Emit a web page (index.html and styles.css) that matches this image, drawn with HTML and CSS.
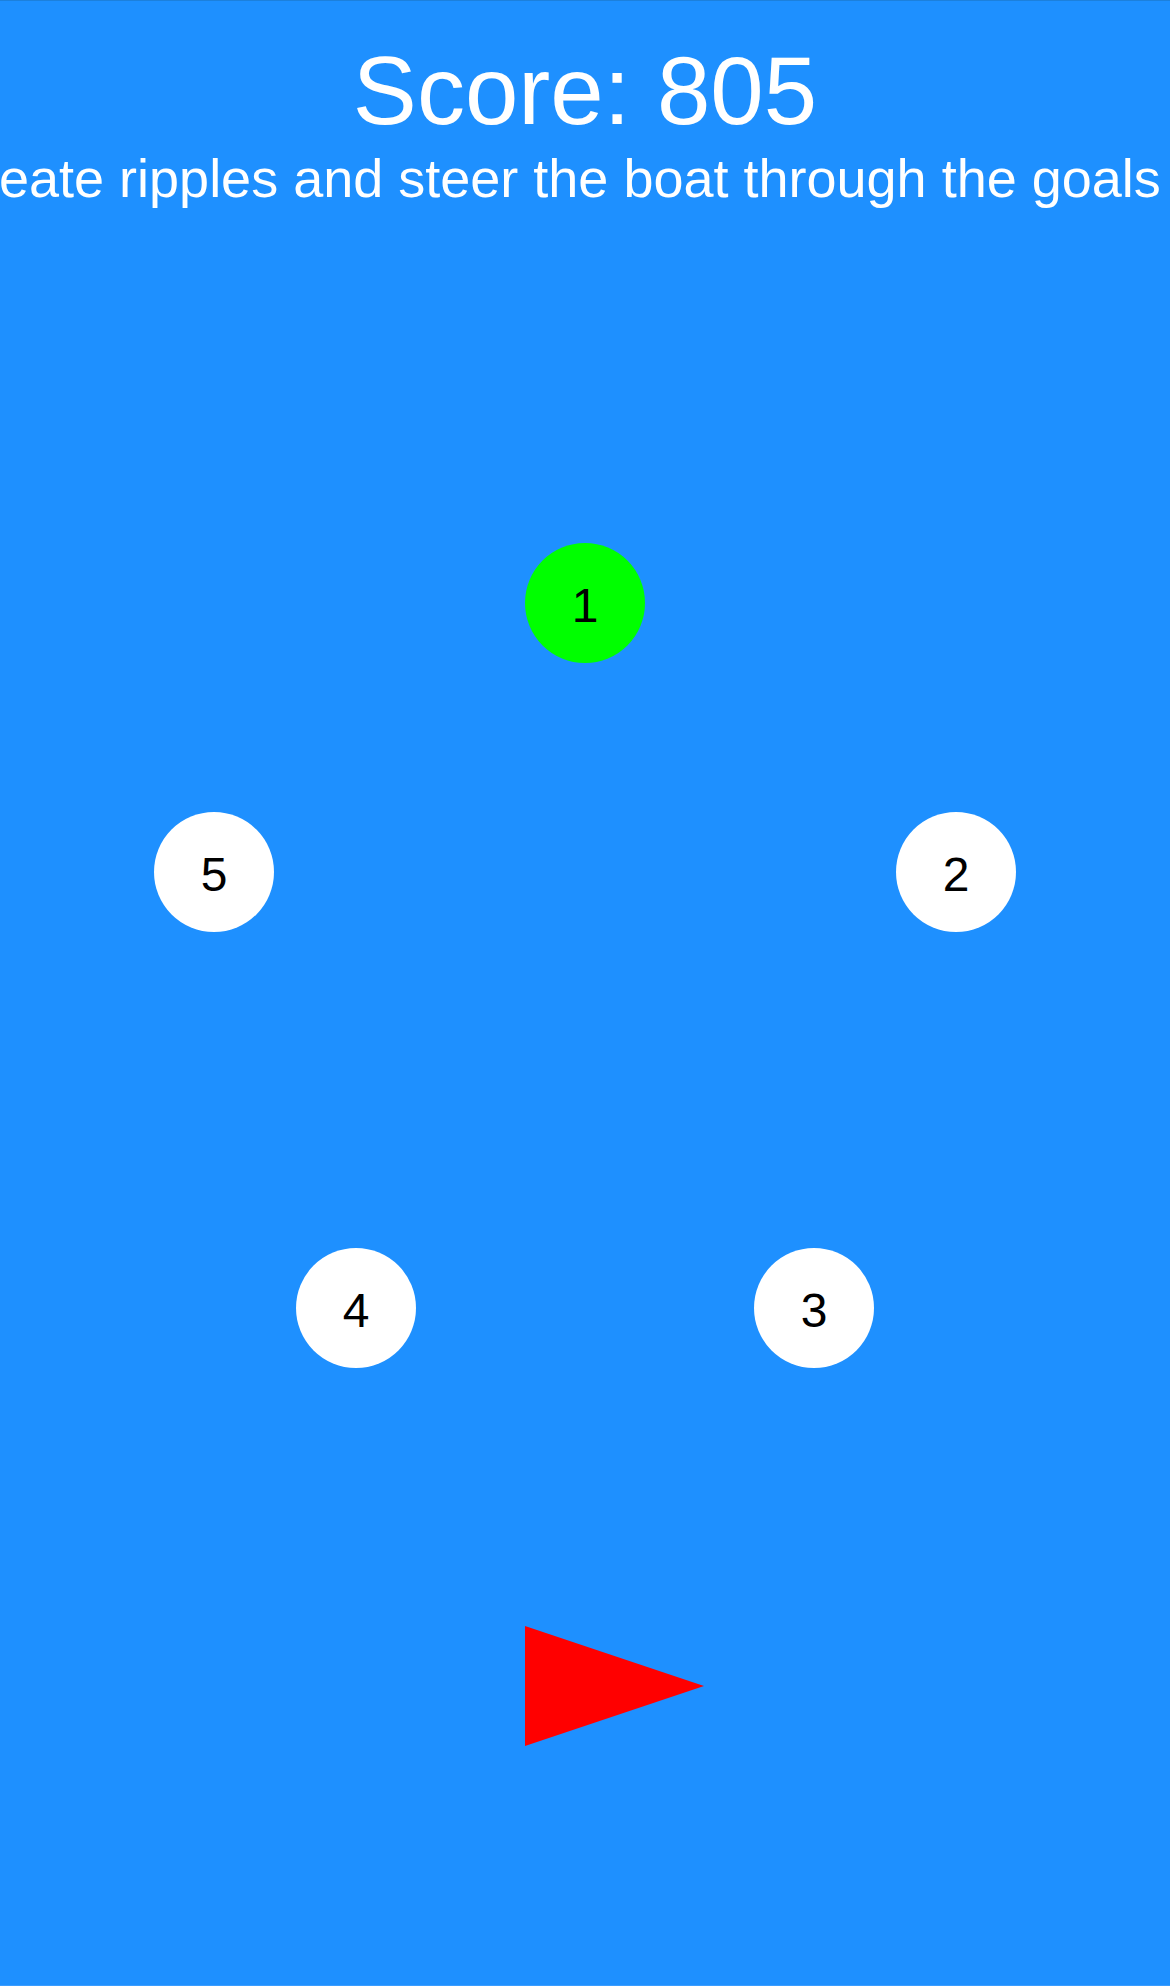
FILE: index.html
```html
<!DOCTYPE html>
<html lang="en">
<head>
<meta charset="utf-8">
<title>Ripple Boat</title>
<link rel="stylesheet" href="styles.css">
</head>
<body>
<main class="game">
  <header class="hud">
    <h1 class="score">Score: 805</h1>
    <p class="hint">Create ripples and steer the boat through the goals</p>
  </header>
  <div class="goal goal-active goal-1">1</div>
  <div class="goal goal-2">2</div>
  <div class="goal goal-3">3</div>
  <div class="goal goal-4">4</div>
  <div class="goal goal-5">5</div>
  <svg class="boat" width="180" height="120" viewBox="0 0 180 120" aria-label="boat">
    <polygon points="0,0 0,120 179,60" fill="#ff0000"/>
  </svg>
</main>
</body>
</html>
```

FILE: styles.css
```css
html, body {
  margin: 0;
  padding: 0;
  background: #1e90ff;
}

.game {
  position: relative;
  width: 1170px;
  height: 1986px;
  box-sizing: border-box;
  border-top: 1px solid #1c80dc;
  border-bottom: 1px solid #3a9cff;
  background: #1e90ff;
  overflow: hidden;
  font-family: "Liberation Sans", Arial, Helvetica, sans-serif;
  color: #ffffff;
}

.hud {
  padding-top: 42px;
}

.score {
  margin: 0;
  font-size: 96px;
  font-weight: normal;
  line-height: 96px;
  text-align: center;
}

.hint {
  margin: 12px 0 0 0;
  padding-bottom: 24px;
  font-size: 54px;
  line-height: 54px;
  white-space: nowrap;
  text-indent: -58px;
  overflow-x: clip;
}

.goal {
  position: absolute;
  width: 120px;
  height: 120px;
  box-sizing: border-box;
  padding-top: 6px;
  border-radius: 50%;
  background: #ffffff;
  color: #000000;
  font-size: 48px;
  line-height: 48px;
  display: flex;
  align-items: center;
  justify-content: center;
}

.goal-active {
  background: #00ff00;
}

.goal-1 { left: 525px; top: 542px; }
.goal-2 { left: 896px; top: 811px; }
.goal-3 { left: 754px; top: 1247px; }
.goal-4 { left: 296px; top: 1247px; }
.goal-5 { left: 154px; top: 811px; }

.boat {
  position: absolute;
  left: 525px;
  top: 1625px;
  display: block;
}
```
